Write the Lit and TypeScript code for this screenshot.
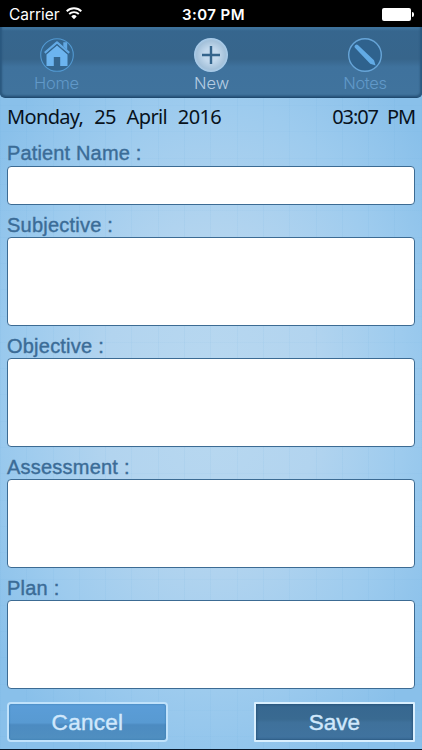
import { LitElement, html, css, svg } from "lit";
import { customElement, property } from "lit/decorators.js";

const wifi = svg`<svg class="wifi" width="16" height="13" viewBox="0 0 16 13" fill="none" stroke="#fff" stroke-width="1.9">
  <path d="M.7 4.2a10.6 10.6 0 0 1 14.6 0M3.2 7a7 7 0 0 1 9.6 0"/>
  <path d="M8 12.2 5.3 9.4a3.9 3.9 0 0 1 5.4 0z" fill="#fff" stroke="none"/></svg>`;

const icons = {
  home: svg`<svg width="36" height="36" viewBox="0 0 36 36">
    <circle cx="18" cy="18" r="16.3" fill="#34668f" stroke="#5299d2" stroke-width="1.1"/>
    <path d="M24.3 5.3h3.9v7.6l-3.9-3.6z" fill="#62a9e4"/>
    <path d="M5.8 15.8 18 5.4l12.2 10.4" fill="none" stroke="#62a9e4" stroke-width="2.2" stroke-linejoin="round"/>
    <path d="M7.5 17.4 18 8.4l10.5 9V29h-7.3v-9h-6.4v9H7.5z" fill="#6cb4ef"/>
    <path d="M7 16.9 18 7.5l11 9.4" fill="none" stroke="#34668f" stroke-width=".8"/></svg>`,
  add: svg`<svg width="36" height="36" viewBox="0 0 36 36">
    <defs><radialGradient id="disc"><stop offset=".4" stop-color="#c3d9ed"/><stop offset=".85" stop-color="#a4c1da"/><stop offset="1" stop-color="#a9cdec"/></radialGradient></defs>
    <circle cx="18" cy="18" r="17" fill="url(#disc)"/>
    <path d="M18 9v18M9 18h18" stroke="#34648c" stroke-width="2.4"/></svg>`,
  pencil: svg`<svg width="36" height="36" viewBox="0 0 36 36">
    <circle cx="18" cy="18" r="16.3" fill="#2f628d" stroke="#67a5d8" stroke-width="1.4"/>
    <path d="M7.7 10.6q-.8-1.4.7-2.6 1.4-1 2.5.1L27 23.2l1.6 5.3-5.4-1.8z" fill="#62abe5"/></svg>`,
};

@customElement("note-field")
class NoteField extends LitElement {
  @property() label = "";
  @property({ type: Boolean, reflect: true }) single = false;
  static styles = css`
    :host { display: block; }
    .label {
      display: block; height: 32px; line-height: 41px; color: #3b6c97;
      font-size: 20px; letter-spacing: .22px; -webkit-text-stroke: .4px #3b6c97;
    }
    .box {
      display: block; box-sizing: border-box; width: 100%; height: 89px; margin: 0; padding: 8px;
      resize: none; outline: none; background: #fff; border: 1.5px solid #3c6b93; border-radius: 4px;
      font: 18px "Liberation Sans", sans-serif;
    }
    :host([single]) .label { height: 25px; line-height: 24px; letter-spacing: .15px; }
    :host([single]) .box { height: 39px; }
  `;
  render() {
    return html`<label class="label" for="box">${this.label} :</label>
      ${this.single
        ? html`<input class="box" id="box" />`
        : html`<textarea class="box" id="box"></textarea>`}`;
  }
}

@customElement("app-root")
class AppRoot extends LitElement {
  static styles = css`
    :host {
      display: flex; flex-direction: column; box-sizing: border-box; width: 422px; height: 750px;
      overflow: hidden; font-family: "Liberation Sans", sans-serif;
      border-bottom: 1px solid #07182b;
      background:
        repeating-linear-gradient(90deg, #5da5d914 0 1px, transparent 1px 26.3px),
        repeating-linear-gradient(180deg, #5da5d90d 0 1px, transparent 1px 26.3px),
        radial-gradient(ellipse 270px 410px at 50% 53%, #b8d8f0 0%, #b2d4ef 40%, #9dcbee 72%, #89c0ea 100%);
    }
    .status {
      display: grid; grid-template-columns: 1fr auto 1fr; align-items: center; height: 27px;
      padding: 2px 8px 0 9px; box-sizing: border-box; background: #000; color: #fff;
      font: 15.5px Inter, sans-serif; flex: none;
    }
    .carrier { display: flex; align-items: center; gap: 7px; letter-spacing: -.05px; }
    .wifi { margin-top: -2px; }
    .time { font-weight: 600; font-size: 15px; letter-spacing: .45px; padding-left: 4px; }
    .battery { display: flex; align-items: center; justify-self: end; gap: 1px; }
    .cell { width: 29px; height: 13px; border-radius: 2px; background: #fff; }
    .tip { width: 2px; height: 5px; border-radius: 0 2px 2px 0; background: #fff; }
    .tabs {
      flex: none; display: grid; grid-template-columns: 113px 1fr 114px; height: 71px; box-sizing: border-box;
      border-bottom: 1px solid #1f4a70; border-radius: 0 0 5px 5px;
      background: linear-gradient(#4479a4 0, #36668e 4px, #37658b 32px, #3f729d 40px, #40739d 100%);
      box-shadow: inset 2px -1px 2px #2a587f, inset -2px -1px 2px #2a587f;
    }
    .tab { display: flex; flex-direction: column; align-items: center; padding-top: 10px; color: #6199c9; }
    .tab svg { display: block; }
    .tab span { margin-top: -1px; font: 300 16.5px/22px Inter, sans-serif; letter-spacing: -.3px; }
    .tab.active { color: #b4cce2; }
    .tab.active svg { margin-left: 1px; }
    .tab.active span { letter-spacing: 0; padding-left: 2px; }
    .form { flex: 1; padding: 0 7px; }
    .when {
      display: flex; justify-content: space-between; height: 43px; line-height: 37px;
      font-family: "Noto Sans", sans-serif; font-size: 20px; color: #08121c; letter-spacing: -.65px;
    }
    .day { word-spacing: 6.3px; }
    .clock { word-spacing: 5px; letter-spacing: -1.1px; }
    .actions { display: flex; justify-content: space-between; height: 39px; padding: 0 7px; margin-bottom: 8px; }
    .action {
      box-sizing: border-box; width: 161px; height: 40px; padding: 2px 0 0; border: 2px solid #c0e2fb; border-radius: 4px;
      color: #d0e8fc; font: 22.5px "Liberation Sans", sans-serif; letter-spacing: .3px; -webkit-text-stroke: .4px #d0e8fc;
      background: linear-gradient(#5b9dd8, #589ad2 52%, #4c8bc1 58%, #508fc0);
      box-shadow: inset 0 0 2px #3475aa;
    }
    .action.save {
      border: 2px solid #d9effe; border-radius: 1px; letter-spacing: 0;
      background: linear-gradient(#376790, #396a91 42%, #3f719b 52%, #40739f);
      box-shadow: inset 0 0 3px #174267;
    }
  `;
  render() {
    return html`
      <div class="status">
        <div class="carrier"><span>Carrier</span>${wifi}</div>
        <span class="time">3:07 PM</span>
        <div class="battery"><div class="cell"></div><div class="tip"></div></div>
      </div>
      <nav class="tabs">
        <div class="tab">${icons.home}<span>Home</span></div>
        <div class="tab active">${icons.add}<span>New</span></div>
        <div class="tab">${icons.pencil}<span>Notes</span></div>
      </nav>
      <main class="form">
        <div class="when"><span class="day">Monday, 25 April 2016</span><span class="clock">03:07 PM</span></div>
        <note-field label="Patient Name" single></note-field>
        ${["Subjective", "Objective", "Assessment", "Plan"].map((l) => html`<note-field label=${l}></note-field>`)}
      </main>
      <footer class="actions">
        <button class="action">Cancel</button>
        <button class="action save">Save</button>
      </footer>`;
  }
}
